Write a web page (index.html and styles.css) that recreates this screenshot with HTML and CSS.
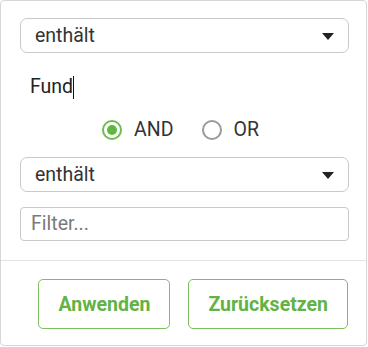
FILE: index.html
```html
<!DOCTYPE html>
<html lang="de">
<head>
<meta charset="utf-8">
<link rel="stylesheet" href="styles.css">
</head>
<body>
<div class="panel">
  <div class="body">
    <div class="select">
      <span>enthält</span>
      <span class="arrow"></span>
    </div>
    <div class="value"><span>Fund</span><span class="caret"></span></div>
    <div class="radios">
      <label class="radio"><span class="ring on"></span><span>AND</span></label>
      <label class="radio"><span class="ring"></span><span>OR</span></label>
    </div>
    <div class="select second">
      <span>enthält</span>
      <span class="arrow"></span>
    </div>
    <div class="input"><span class="placeholder">Filter...</span></div>
  </div>
  <div class="footer">
    <button class="btn">Anwenden</button>
    <button class="btn">Zurücksetzen</button>
  </div>
</div>
</body>
</html>
```
FILE: styles.css
```css
html, body {
  margin: 0;
  padding: 0;
  background: #ffffff;
}
body {
  font-family: Roboto, "Liberation Sans", sans-serif;
  font-size: 19.5px;
  color: #333333;
}
.panel {
  box-sizing: border-box;
  width: 367px;
  height: 346px;
  border: 1px solid #d6d6d6;
  border-radius: 4px;
  display: flex;
  flex-direction: column;
  background: #ffffff;
}
.body {
  padding: 17px 17px 0 19px;
  display: flex;
  flex-direction: column;
}
.select {
  box-sizing: border-box;
  height: 35px;
  border: 1px solid #c9c9c9;
  border-radius: 7px;
  display: flex;
  align-items: center;
  justify-content: space-between;
  padding: 0 14px 0 14px;
  line-height: 24px;
}
.arrow {
  width: 0;
  height: 0;
  border-left: 6px solid transparent;
  border-right: 6px solid transparent;
  border-top: 7px solid #222222;
  margin-top: 1px;
}
.value {
  margin-top: 22px;
  padding-left: 10px;
  line-height: 24px;
  height: 24px;
  display: flex;
  align-items: center;
  color: #222222;
}
.caret {
  display: inline-block;
  width: 1px;
  height: 23px;
  background: #111111;
}
.radios {
  margin-top: 19px;
  height: 24px;
  display: flex;
  justify-content: center;
  align-items: center;
  gap: 28px;
  padding-right: 8px;
}
.radio {
  display: flex;
  align-items: center;
  gap: 12px;
  line-height: 24px;
}
.ring {
  box-sizing: border-box;
  width: 20px;
  height: 20px;
  border-radius: 50%;
  border: 2px solid #9a9a9a;
  display: flex;
  align-items: center;
  justify-content: center;
}
.ring.on {
  border: 2.5px solid #6cbd4e;
}
.ring.on::after {
  content: "";
  width: 10px;
  height: 10px;
  border-radius: 50%;
  background: #5fb740;
}
.second {
  margin-top: 15px;
}
.input {
  box-sizing: border-box;
  margin-top: 15px;
  height: 34px;
  border: 1px solid #c9c9c9;
  border-radius: 4px;
  display: flex;
  align-items: center;
  padding-left: 10px;
  line-height: 24px;
}
.placeholder {
  color: #7a7a7a;
}
.footer {
  margin-top: 19px;
  border-top: 1px solid #e2e2e2;
  padding: 18px 18px 0 0;
  display: flex;
  justify-content: flex-end;
  gap: 18px;
}
.btn {
  box-sizing: border-box;
  height: 50px;
  padding: 0 19px;
  background: #ffffff;
  border: 1px solid #7cc05e;
  border-radius: 5px;
  font-family: Roboto, "Liberation Sans", sans-serif;
  font-size: 19.5px;
  font-weight: bold;
  color: #62b343;
}
```
